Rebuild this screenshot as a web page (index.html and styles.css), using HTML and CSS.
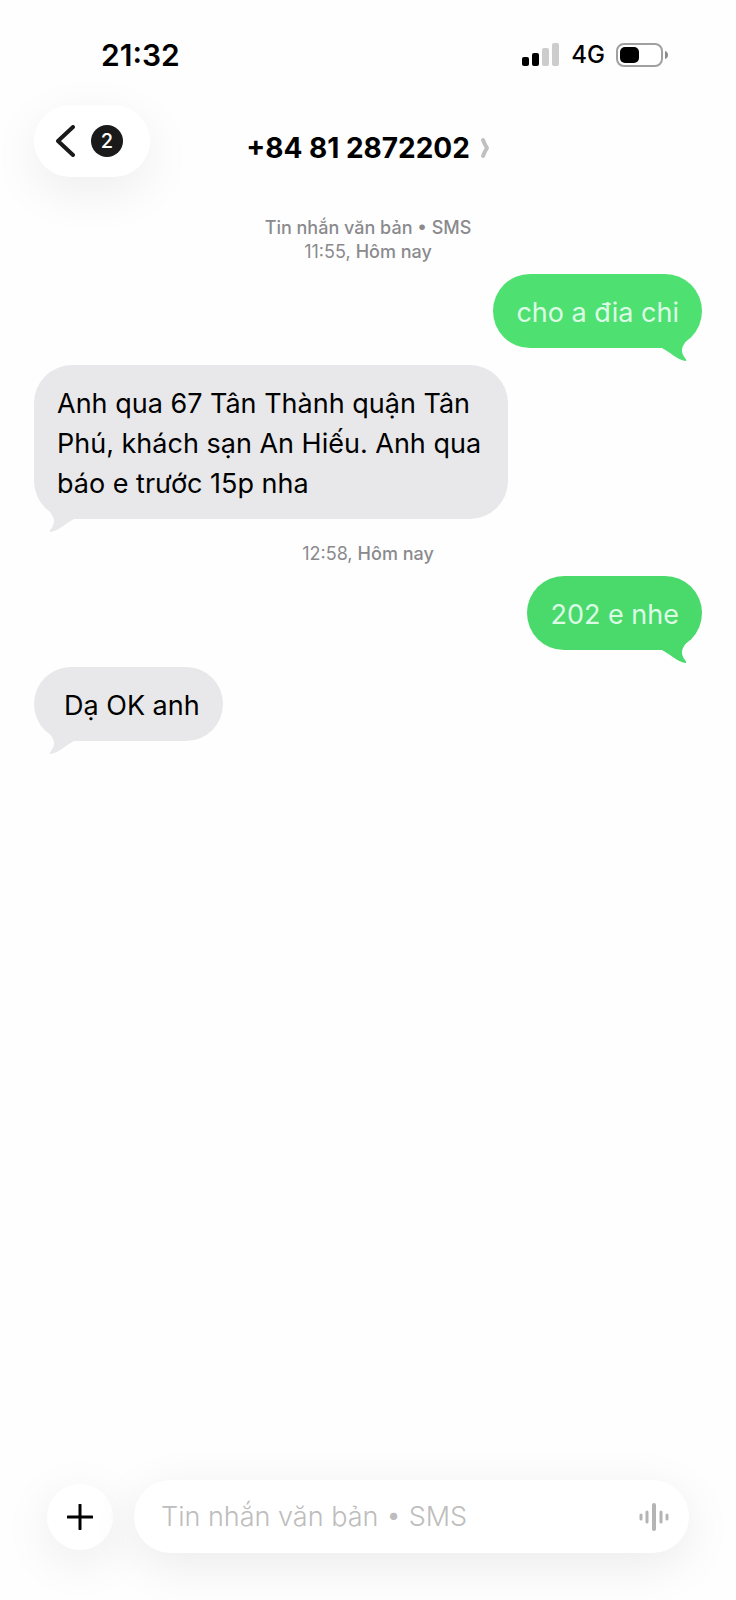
FILE: index.html
```html
<!DOCTYPE html>
<html lang="vi">
<head>
    <meta charset="UTF-8">
    <meta name="viewport" content="width=device-width, initial-scale=1.0">
    <title>+84 81 2872202</title>
    <link rel="stylesheet" href="styles.css">
</head>
<body>
    <div class="phone">
        <div class="status-bar">
            <span class="time">21:32</span>
            <div class="status-icons">
                <svg class="signal" width="38" height="24" viewBox="0 0 38 24" aria-hidden="true">
                    <rect x="0" y="14" width="7" height="9" rx="2" fill="#000"/>
                    <rect x="10" y="10" width="7" height="13" rx="2" fill="#000"/>
                    <rect x="20" y="5" width="7" height="18" rx="2" fill="#cccccc"/>
                    <rect x="30" y="0" width="7" height="23" rx="2" fill="#cccccc"/>
                </svg>
                <span class="network">4G</span>
                <svg class="battery" width="53" height="24" viewBox="0 0 53 24" aria-hidden="true">
                    <rect x="1" y="1" width="45" height="22" rx="7" fill="#fff" stroke="#a0a0a0" stroke-width="2"/>
                    <rect x="4" y="4" width="19" height="16" rx="5" fill="#000"/>
                    <path d="M49 8c4 1 4 7 0 8z" fill="#8c8c8c"/>
                </svg>
            </div>
        </div>

        <header class="chat-header">
            <button class="back-btn" aria-label="Quay lại">
                <svg width="19" height="32" viewBox="0 0 19 32" aria-hidden="true">
                    <path d="M17 2L2 16l15 14" fill="none" stroke="#1a1a1a" stroke-width="4" stroke-linecap="round" stroke-linejoin="round"/>
                </svg>
                <span class="unread">2</span>
            </button>
            <h1 class="contact">
                <a href="#">+84 81 2872202
                    <svg width="10" height="22" viewBox="0 0 10 22" aria-hidden="true">
                        <path d="M3 3q2 5 4 8q-2 3-4 8" fill="none" stroke="#c0c0c0" stroke-width="4" stroke-linecap="round" stroke-linejoin="round"/>
                    </svg>
                </a>
            </h1>
        </header>

        <main class="messages">
            <p class="meta"><b>Tin nhắn văn bản • SMS</b><br>11:55, <b>Hôm nay</b></p>

            <div class="bubble sent">
                cho a đia chi
                <svg class="tail" width="26" height="22" viewBox="0 0 26 22" aria-hidden="true">
                    <path d="M0 9C8 13 14 20 23 22c2 0 1-2 0-3c-3-4-4-8-2-12l4-7H0z"/>
                </svg>
            </div>

            <div class="bubble received">
                Anh qua 67 Tân Thành quận Tân Phú, khách sạn An Hiếu. Anh qua báo e trước 15p nha
                <svg class="tail" width="26" height="22" viewBox="0 0 26 22" aria-hidden="true">
                    <path d="M0 9C8 13 14 20 23 22c2 0 1-2 0-3c-3-4-4-8-2-12l4-7H0z"/>
                </svg>
            </div>

            <p class="meta">12:58, <b>Hôm nay</b></p>

            <div class="bubble sent sent-dark">
                202 e nhe
                <svg class="tail" width="26" height="22" viewBox="0 0 26 22" aria-hidden="true">
                    <path d="M0 9C8 13 14 20 23 22c2 0 1-2 0-3c-3-4-4-8-2-12l4-7H0z"/>
                </svg>
            </div>

            <div class="bubble received short">
                Dạ OK anh
                <svg class="tail" width="26" height="22" viewBox="0 0 26 22" aria-hidden="true">
                    <path d="M0 9C8 13 14 20 23 22c2 0 1-2 0-3c-3-4-4-8-2-12l4-7H0z"/>
                </svg>
            </div>
        </main>

        <form class="composer">
            <button type="button" class="add-btn" aria-label="Thêm">
                <svg width="26" height="26" viewBox="0 0 26 26" aria-hidden="true">
                    <path d="M13 1v24M1 13h24" stroke="#000" stroke-width="3" stroke-linecap="round"/>
                </svg>
            </button>
            <div class="field">
                <input type="text" placeholder="Tin nhắn văn bản • SMS" aria-label="Tin nhắn văn bản">
                <button type="button" class="voice-btn" aria-label="Ghi âm">
                    <svg width="32" height="28" viewBox="0 0 32 28" aria-hidden="true">
                        <path d="M3 12v4M9 9v10M23 9v10M29 12v4" stroke="#b4b4b4" stroke-width="3" stroke-linecap="round"/>
                        <path d="M16 2v24" stroke="#b4b4b4" stroke-width="4" stroke-linecap="round"/>
                    </svg>
                </button>
            </div>
        </form>
    </div>
</body>
</html>
```

FILE: styles.css
```css
* {
    box-sizing: border-box;
}

body {
    margin: 0;
    font-family: Inter, "Noto Sans", sans-serif;
    background: #fefefe;
    color: #000;
}

button {
    border: none;
    padding: 0;
    font-family: inherit;
    cursor: pointer;
}

svg {
    display: block;
}

.phone {
    display: flex;
    flex-direction: column;
    min-height: 100vh;
    overflow: hidden;
}

/* Status bar */
.status-bar {
    display: flex;
    justify-content: space-between;
    align-items: center;
    height: 105px;
    padding: 4px 67px 0 101px;
}

.time {
    font-size: 30px;
    font-weight: 600;
}

.status-icons {
    display: flex;
    align-items: center;
    gap: 11px;
}

.network {
    font-size: 24px;
    font-weight: 500;
}

/* Header */
.chat-header {
    display: grid;
    grid-template-columns: 1fr auto 1fr;
    align-items: center;
    padding: 0 34px;
}

.back-btn {
    display: flex;
    align-items: center;
    justify-self: start;
    gap: 16px;
    height: 72px;
    padding: 0 27px 0 22px;
    border-radius: 36px;
    background: #fff;
    box-shadow: 0 14px 50px rgba(0, 0, 0, 0.07);
}

.unread {
    width: 32px;
    height: 32px;
    border-radius: 50%;
    background: #1a1a1a;
    color: #fff;
    font-size: 20px;
    font-weight: 500;
    line-height: 32px;
}

.contact {
    margin: 14px 0 0;
    font-size: 28px;
    line-height: 32px;
    font-weight: 700;
}

.contact a {
    display: flex;
    align-items: center;
    gap: 10px;
    color: inherit;
    text-decoration: none;
}

/* Messages */
.messages {
    flex: 1;
    display: flex;
    flex-direction: column;
    padding: 39px 34px 0;
}

.meta {
    margin: 0 0 10px;
    color: #8a8a8d;
    font-size: 18px;
    line-height: 24px;
    text-align: center;
}

.meta b {
    font-weight: 500;
}

.bubble {
    position: relative;
    max-width: 474px;
    margin-bottom: 17px;
    padding: 19px 23px 15px;
    border-radius: 38px;
    font-size: 27px;
    line-height: 40px;
}

.sent {
    align-self: flex-end;
    background: #4fe072;
    color: #dcfbe4;
    font-weight: 400;
}

.sent-dark {
    background: #49da6b;
}

.received {
    align-self: flex-start;
    background: #e8e8ea;
}

.received + .meta {
    margin-top: 6px;
}

.short {
    padding-left: 30px;
}

.tail {
    position: absolute;
    right: 14px;
    bottom: -13px;
    fill: #4fe072;
}

.sent-dark .tail {
    fill: #49da6b;
}

.received .tail {
    right: auto;
    left: 14px;
    fill: #e8e8ea;
    transform: scaleX(-1);
}

/* Composer */
.composer {
    display: flex;
    align-items: center;
    gap: 21px;
    padding: 0 47px 47px;
}

.add-btn {
    display: flex;
    align-items: center;
    justify-content: center;
    flex: none;
    width: 66px;
    height: 66px;
    border-radius: 50%;
    background: #fff;
    box-shadow: 0 12px 50px rgba(0, 0, 0, 0.08);
}

.field {
    flex: 1;
    display: flex;
    align-items: center;
    height: 73px;
    padding: 0 19px 0 27px;
    border-radius: 37px;
    background: #fff;
    box-shadow: 0 12px 50px rgba(0, 0, 0, 0.08);
}

.field input {
    flex: 1;
    min-width: 0;
    padding: 0;
    border: none;
    outline: none;
    background: none;
    font-family: inherit;
    font-size: 27px;
    font-weight: 300;
}

.field input::placeholder {
    color: #bdbdbd;
    opacity: 1;
}

.voice-btn {
    background: none;
}
```
